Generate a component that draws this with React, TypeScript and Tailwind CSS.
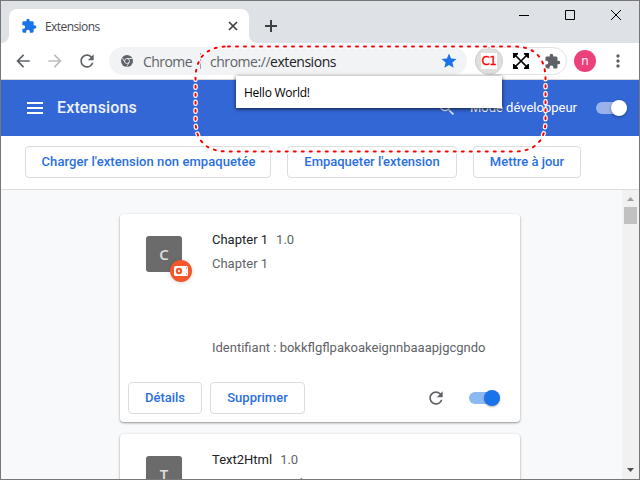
import React from "react";
import { MdArrowBack, MdArrowForward, MdExtension, MdMoreVert, MdRefresh, MdSearch, MdStar } from "react-icons/md";

const ui = "font-['Open_Sans','Noto_Sans',sans-serif]";

function OutlineButton({ children, className }: { children: React.ReactNode; className: string }) {
  return (
    <button className={`h-8 shrink-0 rounded-[4px] border border-[#dadce0] bg-white text-[13px] font-medium leading-[30px] text-[#2a6fe0] whitespace-nowrap ${className}`}>
      {children}
    </button>
  );
}

function TabStrip() {
  return (
    <div className="flex h-[42px] shrink-0 bg-[#dee1e6]">
      <svg className="mt-[34px] h-2 w-2 shrink-0" viewBox="0 0 8 8"><path d="M8 0v8H0a8 8 0 0 0 8-8z" fill="#fff" /></svg>
      <div className="mt-2 flex h-[34px] w-[240px] items-center rounded-t-[8px] bg-white pl-[12px] pr-[10px]">
        <MdExtension className="size-4 text-[#1a73e8]" />
        <span className={`ml-2 mt-px text-[12px] tracking-[-0.57px] text-[#45484d] ${ui}`}>Extensions</span>
        <svg className="ml-auto size-3" viewBox="0 0 12 12" stroke="#3c4043" strokeWidth="1.7"><path d="M2 2l8 8M10 2l-8 8" /></svg>
      </div>
      <svg className="mt-[34px] h-2 w-2 shrink-0" viewBox="0 0 8 8"><path d="M0 0v8h8a8 8 0 0 1-8-8z" fill="#fff" /></svg>
      <svg className="ml-2 mt-[19px] size-3" viewBox="0 0 12 12" stroke="#3c4043" strokeWidth="2"><path d="M6 0v12M0 6h12" /></svg>
      <div className="ml-auto flex gap-[36px] pr-[18px] pt-[9px]">
        <svg className="size-[10px]" viewBox="0 0 10 10" stroke="#000"><path d="M0 5.5h10" /></svg>
        <svg className="size-[10px]" viewBox="0 0 10 10" fill="none" stroke="#000"><path d="M.5.5h9v9h-9z" /></svg>
        <svg className="size-[10px]" viewBox="0 0 10 10" stroke="#000"><path d="M0 0l10 10M10 0L0 10" /></svg>
      </div>
    </div>
  );
}

function AddressBar() {
  return (
    <div className="flex h-[37px] shrink-0 items-center border-b border-[#d5d7da] bg-white pl-[12px] text-[#5f6368]">
      <MdArrowBack className="size-5" />
      <MdArrowForward className="ml-3 size-5 text-[#bdbdbd]" />
      <MdRefresh className="ml-3 size-5" />
      <div className={`ml-3 flex h-7 w-[358px] items-center rounded-full bg-[#f1f3f4] pl-3 pr-[9px] text-[14px] ${ui}`}>
        <svg className="size-3 shrink-0" viewBox="0 0 12 12">
          <circle cx="6" cy="6" r="6" fill="#5f6368" />
          <circle cx="6" cy="6" r="2.5" fill="#5f6368" stroke="#f1f3f4" strokeWidth=".8" />
          <path d="M6 3.5h5.3M3.8 7.2L1.2 2.7M8.2 7.2L5.6 11.8" stroke="#f1f3f4" strokeWidth=".8" />
        </svg>
        <span className="ml-[10px] w-[49px] tracking-[-0.55px]">Chrome</span>
        <span className="ml-2 h-4 w-px bg-[#9aa0a6]" />
        <span className="ml-[9px] whitespace-nowrap tracking-[-0.46px]">chrome://<span className="text-[#202124]">extensions</span></span>
        <MdStar className="ml-auto size-[18px] shrink-0 text-[#1a73e8]" />
      </div>
      <div className="ml-2 flex h-7 w-[92px] items-center rounded-full border border-[#e0e2e5]">
        <div className="-ml-px flex size-7 shrink-0 items-center justify-center rounded-full border border-[#cfcfcf] bg-[#dfdfdf]">
          <span className="flex h-4 w-4 items-center justify-center bg-white font-['DejaVu_Sans',sans-serif] text-[12px] tracking-[-0.6px] text-[#f00] [-webkit-text-stroke:0.3px_#f00]">C1</span>
        </div>
        <svg className="ml-[9px] size-[18px] shrink-0" viewBox="0 0 18 18" fill="#000">
          <path d="M3 3l12 12M15 3L3 15" stroke="#000" strokeWidth="1.7" />
          <path d="M1 1h5v1.2L2.2 6H1zM17 1v5h-1.2L12 2.2V1zM1 17v-5h1.2L6 15.8V17zM17 17h-5v-1.2l3.8-3.8H17z" />
        </svg>
        <MdExtension className="ml-[14px] size-[17px] shrink-0" />
      </div>
      <div className={`ml-[7px] flex size-[22px] items-center justify-center rounded-full bg-[#ec407a] pb-px text-[12px] text-white ${ui}`}>n</div>
      <MdMoreVert className="ml-3 size-[20px]" />
    </div>
  );
}

function ExtensionCard({ letter, name, badge, description, children }: { letter: string; name: string; badge?: boolean; description: string; children?: React.ReactNode }) {
  return (
    <section className="flex h-[208px] w-[400px] shrink-0 flex-col rounded-[4px] bg-white text-[13px] leading-5 text-[#5f6368] shadow-[0_1px_2px_rgba(60,64,67,.4),0_1px_3px_rgba(60,64,67,.2)]">
      <div className="flex pl-[26px]">
        <div className={`relative mt-[22px] flex size-9 items-center justify-center rounded-[3px] bg-[#6b6b6b] text-[15px] font-semibold text-[#e0e0e0] ${ui}`}>
          {letter}
          {badge && (
            <svg className="absolute left-6 top-6 size-[22px] drop-shadow-sm" viewBox="0 0 22 22">
              <circle cx="11" cy="11" r="11" fill="#f4572a" />
              <rect x="4" y="6" width="14" height="10" rx="1.5" fill="#fff" />
              <circle cx="9" cy="11" r="3.2" fill="#f4572a" />
              <circle cx="9" cy="11" r="1.1" fill="#fff" />
              <path d="M16 7.5h1v1h-1zM16 13.5h1v1h-1z" fill="#f4572a" />
            </svg>
          )}
        </div>
        <div className="ml-[30px] pt-4">
          <div className="flex gap-2"><span className="text-[#202124]">{name}</span><span>1.0</span></div>
          <div className="mt-1">{description}</div>
        </div>
      </div>
      {children}
    </section>
  );
}

function ScrollBar() {
  return (
    <div className="flex w-[17px] shrink-0 flex-col items-center bg-[#f1f1f1] py-[7px]">
      <svg className="h-[4px] w-[7px]" viewBox="0 0 7 4"><path d="M0 4h7L3.5 0z" fill="#a0a0a0" /></svg>
      <div className="mt-[6px] h-[17px] w-[13px] bg-[#c1c1c1]" />
      <svg className="mt-auto h-[4px] w-[7px]" viewBox="0 0 7 4"><path d="M0 0h7L3.5 4z" fill="#505050" /></svg>
    </div>
  );
}

const outline = "M228 46.5H514C535 46.5 545.5 58 545.5 79V120C545.5 141 535 151.5 514 151.5H228C206 151.5 195.5 141 195.5 120V79C195.5 58 206 46.5 228 46.5";

export default function App() {
  return (
    <div className="relative flex h-[480px] w-[640px] flex-col overflow-hidden border border-[#777] bg-white font-[Roboto,sans-serif]">
      <TabStrip />
      <AddressBar />
      <header className="flex h-14 shrink-0 items-center bg-[#3367d6] pl-[26px] pr-[12px] text-white">
        <svg className="h-3 w-4" viewBox="0 0 16 12"><path d="M0 1h16M0 6h16M0 11h16" stroke="#fff" strokeWidth="2" /></svg>
        <h1 className="ml-[14px] text-[16px] font-medium tracking-[0.15px] text-[#edf2fc]">Extensions</h1>
        <MdSearch className="ml-auto size-5 text-[#d4dff5]" />
        <span className="ml-[13px] text-[13px]">Mode développeur</span>
        <div className="ml-[19px] flex h-3 w-[31px] items-center justify-end rounded-full bg-[#99b3ea]">
          <span className="size-4 shrink-0 rounded-full bg-white shadow-[0_1px_3px_rgba(0,0,0,.4)]" />
        </div>
      </header>
      <div className="flex h-[54px] shrink-0 items-start border-b border-[#dadce0] bg-white pl-6 pt-[10px]">
        <OutlineButton className="w-[246px] pl-px tracking-[0.06px]">Charger l'extension non empaquetée</OutlineButton>
        <OutlineButton className="ml-4 w-[170px]">Empaqueter l'extension</OutlineButton>
        <OutlineButton className="ml-4 w-[108px]">Mettre à jour</OutlineButton>
      </div>
      <div className="flex min-h-0 flex-1">
        <main className="flex flex-1 flex-col gap-3 overflow-hidden bg-[#f8f9fa] pl-[119px] pt-6">
          <ExtensionCard letter="C" name="Chapter 1" description="Chapter 1" badge>
            <div className="ml-[92px] mt-16 whitespace-nowrap">Identifiant : bokkflgflpakoakeignnbaaapjgcgndo</div>
            <div className="mb-2 mt-auto flex items-center pl-2 pr-5">
              <OutlineButton className="w-[74px]">Détails</OutlineButton>
              <OutlineButton className="ml-2 w-[95px]">Supprimer</OutlineButton>
              <MdRefresh className="ml-auto size-5" />
              <div className="ml-[23px] flex h-3 w-[31px] items-center justify-end rounded-full bg-[#8cb8f3]">
                <span className="size-4 shrink-0 rounded-full bg-[#1a73e8] shadow-[0_1px_2px_rgba(0,0,0,.3)]" />
              </div>
            </div>
          </ExtensionCard>
          <ExtensionCard letter="T" name="Text2Html" description="Convertisseur de texte" />
        </main>
        <ScrollBar />
      </div>
      <div className={`absolute left-[235px] top-[75px] h-8 w-[266px] bg-white pl-2 text-[12px] leading-[34px] tracking-[-0.25px] text-black shadow-[0_1px_4px_rgba(0,0,0,.75)] ${ui}`}>Hello World!</div>
      <svg className="pointer-events-none absolute -left-px -top-px h-[480px] w-[640px]" viewBox="0 0 640 480" fill="none" strokeLinecap="round">
        <path d={outline} stroke="#fff" strokeWidth="4.5" strokeDasharray="2 6" />
        <path d={outline} stroke="#f00" strokeWidth="2" strokeDasharray="2 6" />
      </svg>
    </div>
  );
}
